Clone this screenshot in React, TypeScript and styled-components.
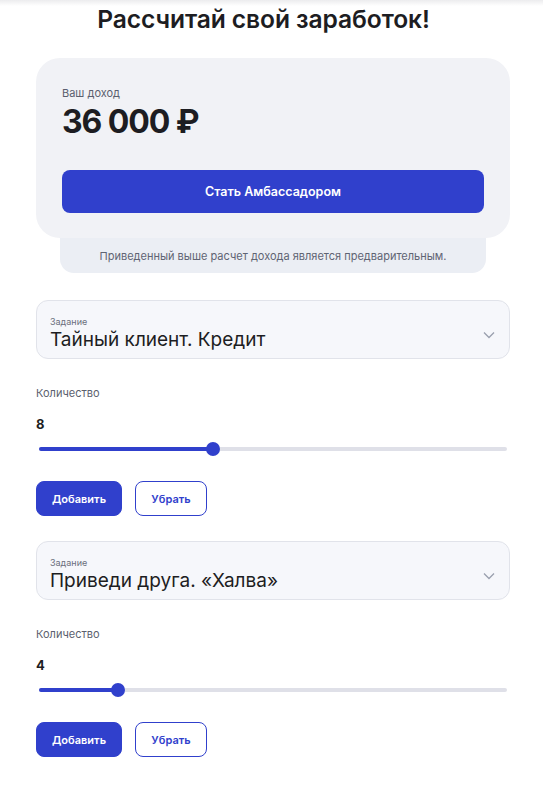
import styled, {createGlobalStyle} from "styled-components";

const GlobalStyle = createGlobalStyle`
  html, body {
    margin: 0;
    padding: 0;
    background: #ffffff;
    font-family: Inter, "Noto Sans", sans-serif;
    color: #1d1d22;
  }
`;

const Page = styled.div`
  position: relative;
  padding: 4px 33px 0 36px;
  box-sizing: border-box;
  width: 543px;
  min-height: 791px;
  &::before {
    content: "";
    position: absolute;
    top: 0;
    left: 0;
    right: 0;
    height: 6px;
    background: linear-gradient(#ececee, rgba(255, 255, 255, 0));
  }
`;

const Title = styled.h1`
  margin: 0;
  padding-right: 19px;
  text-align: center;
  font-size: 24.6px;
  line-height: 30px;
  font-weight: 600;
  letter-spacing: -0.1px;
`;

const IncomeBlock = styled.div`
  margin-top: 24px;
  display: flex;
  flex-direction: column;
  align-items: center;
`;

const IncomeCard = styled.div`
  width: 100%;
  box-sizing: border-box;
  background: #f1f2f6;
  border-radius: 24px;
  padding: 28px 26px 25px;
  position: relative;
  z-index: 1;
`;

const IncomeLabel = styled.div`
  font-size: 11px;
  line-height: 14px;
  color: #5b5f6e;
`;

const IncomeValue = styled.div`
  margin-top: 3px;
  font-size: 32px;
  line-height: 38px;
  font-weight: 700;
  letter-spacing: -1.1px;
`;

const PrimaryWide = styled.button`
  margin-top: 29px;
  width: 100%;
  height: 43px;
  border: none;
  border-radius: 8px;
  background: #3040cc;
  color: #fff;
  font-family: inherit;
  font-size: 12.5px;
  font-weight: 600;
`;

const Disclaimer = styled.div`
  width: 426px;
  box-sizing: border-box;
  background: #ebeef4;
  border-radius: 0 0 14px 14px;
  padding: 10px 0 9px;
  text-align: center;
  font-size: 11px;
  line-height: 16px;
  color: #5f6473;
`;

const TaskList = styled.div`
  margin-top: 27px;
  display: flex;
  flex-direction: column;
  gap: 25px;
`;

const TaskBlock = styled.div``;

const Select = styled.div`
  height: 59px;
  box-sizing: border-box;
  border: 1px solid #e1e3ea;
  border-radius: 12px;
  background: #f6f7fb;
  padding: 15px 14px 0 13px;
  display: flex;
  align-items: flex-start;
  justify-content: space-between;
`;

const SelectText = styled.div`
  display: flex;
  flex-direction: column;
`;

const SelectLabel = styled.span`
  font-size: 9px;
  line-height: 12px;
  color: #6a6e7c;
`;

const SelectValue = styled.span`
  font-size: 19px;
  line-height: 24px;
  color: #1d1d22;
`;

const Chevron = styled.svg`
  margin-top: 15px;
`;

const QtyLabel = styled.div`
  margin-top: 27px;
  font-size: 11px;
  line-height: 14px;
  color: #5b5f6e;
`;

const QtyValue = styled.div`
  margin-top: 16px;
  font-size: 13px;
  line-height: 16px;
  font-weight: 700;
`;

const Track = styled.div`
  position: relative;
  margin: 15px 3px 0;
  height: 4px;
  border-radius: 2px;
  background: #dfe0e8;
`;

const Fill = styled.div`
  position: absolute;
  left: 0;
  top: 0;
  bottom: 0;
  border-radius: 2px;
  background: #3040cc;
`;

const Thumb = styled.div`
  position: absolute;
  top: 50%;
  width: 14px;
  height: 14px;
  margin: -7px 0 0 -7px;
  border-radius: 50%;
  background: #3040cc;
`;

const ButtonRow = styled.div`
  margin-top: 30px;
  display: flex;
  gap: 13px;
`;

const ActionButton = styled.button<{$outline?: boolean}>`
  height: 35px;
  box-sizing: border-box;
  padding: 0;
  width: ${(p) => (p.$outline ? "72px" : "86px")};
  border-radius: 8px;
  border: 1px solid #3040cc;
  background: ${(p) => (p.$outline ? "#fff" : "#3040cc")};
  color: ${(p) => (p.$outline ? "#3040cc" : "#fff")};
  font-family: inherit;
  font-size: 11px;
  font-weight: 600;
`;

interface Task {
  name: string;
  qty: number;
  percent: number;
}

const tasks: Task[] = [
  {name: "Тайный клиент. Кредит", qty: 8, percent: 37.2},
  {name: "Приведи друга. «Халва»", qty: 4, percent: 16.9},
];

const TaskItem = ({task}: {task: Task}) => (
  <TaskBlock>
    <Select>
      <SelectText>
        <SelectLabel>Задание</SelectLabel>
        <SelectValue>{task.name}</SelectValue>
      </SelectText>
      <Chevron width="12" height="8" viewBox="0 0 12 8" fill="none">
        <path d="M1 1.5l5 5 5-5" stroke="#9aa0ae" strokeWidth="1.3" />
      </Chevron>
    </Select>
    <QtyLabel>Количество</QtyLabel>
    <QtyValue>{task.qty}</QtyValue>
    <Track>
      <Fill style={{width: `${task.percent}%`}} />
      <Thumb style={{left: `${task.percent}%`}} />
    </Track>
    <ButtonRow>
      <ActionButton>Добавить</ActionButton>
      <ActionButton $outline>Убрать</ActionButton>
    </ButtonRow>
  </TaskBlock>
);

export default function App() {
  return (
    <Page>
      <GlobalStyle />
      <Title>Рассчитай свой заработок!</Title>
      <IncomeBlock>
        <IncomeCard>
          <IncomeLabel>Ваш доход</IncomeLabel>
          <IncomeValue>36 000 ₽</IncomeValue>
          <PrimaryWide>Стать Амбассадором</PrimaryWide>
        </IncomeCard>
        <Disclaimer>
          Приведенный выше расчет дохода является предварительным.
        </Disclaimer>
      </IncomeBlock>
      <TaskList>
        {tasks.map((t) => (
          <TaskItem key={t.name} task={t} />
        ))}
      </TaskList>
    </Page>
  );
}
